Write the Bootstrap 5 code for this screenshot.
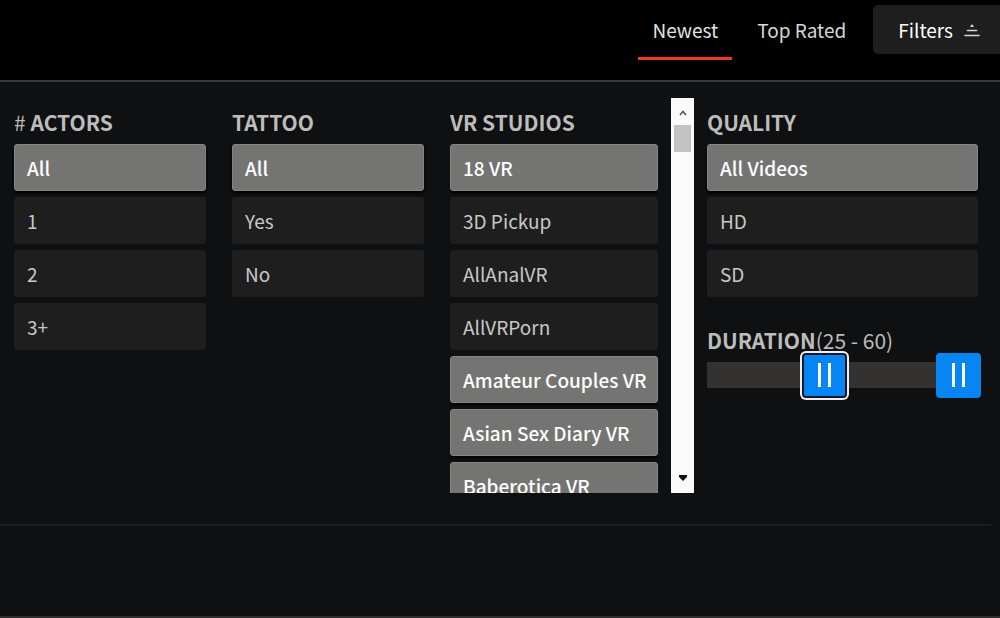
<!DOCTYPE html>
<html lang="en">
<head>
<meta charset="utf-8">
<meta name="viewport" content="width=device-width, initial-scale=1">
<title>Video filters</title>
<link href="https://cdn.jsdelivr.net/npm/bootstrap@5.3.0/dist/css/bootstrap.min.css" rel="stylesheet">
<style>
  body { background: #0f1011; color: #d4d4d2; font-family: "Noto Sans CJK JP", "Open Sans", sans-serif; font-size: 19px; line-height: 32px; }
  .topbar { background: #000; height: 82px; border-bottom: 2px solid #383838; }
  .sort-link { color: #d8d8d6; padding: 14px 14px 11px; border-bottom: 3px solid transparent; text-decoration: none; }
  .sort-link.active { color: #e4e4e2; border-color: #ee3c22; }
  .sort-group { gap: 11px; margin-right: 13px; }
  .filter-toggle { background: #1e1e1e; color: #fff; border: 0; border-radius: 5px 0 0 5px; margin-top: 5px; height: 49px; padding: 0 20px 0 25px; gap: 11px; }
  .filters { display: grid; grid-template-columns: 205fr 205fr 244fr 271fr; column-gap: 13px; padding: 16px 22px 31px 14px; }
  .filters > section { min-width: 0; }
  .narrow-group { padding-right: 13px; }
  .group-title { font-size: 21px; line-height: 32px; font-weight: 700; margin: 0; padding: 8px 0 6px; color: #bcbcba; white-space: nowrap; }
  .group-title span { font-weight: 400; }
  .options { gap: 6px; }
  .option { flex: none; height: 47px; padding: 0 12px; border: 1px solid transparent; border-radius: 3px; background: #1e1e1e; color: #c8c8c6; text-align: left; white-space: nowrap; }
  .option.active { background: #747473; border-color: #858584; color: #fff; font-weight: 500; box-shadow: 0 2px 3px #000; }
  .studios { height: 395px; gap: 13px; }
  .studio-list { overflow: hidden; min-width: 0; }
  .scroll-rail { flex: none; width: 23px; background: #fafafa; padding: 12px 3px; }
  .scroll-thumb { height: 27px; background: #c2c2c2; margin-top: 9px; }
  .duration { padding: 27px 0 0; }
  .range-box { height: 48px; margin: -5px -3px 0 0; }
  .range-rail { height: 26px; background: #333231; margin-right: 3px; }
  .dual { position: absolute; inset: 0; width: 100%; height: 100%; margin: 0; appearance: none; -webkit-appearance: none; background: none; pointer-events: none; outline: 0; }
  .dual::-webkit-slider-thumb {
    -webkit-appearance: none; pointer-events: auto; width: 45px; height: 45px; border: 0; border-radius: 4px;
    background: linear-gradient(#fff, #fff) 16px 50% / 3px 24px no-repeat, linear-gradient(#fff, #fff) 26px 50% / 3px 24px no-repeat, #0785f2;
  }
  .dual.current::-webkit-slider-thumb { border: 2px solid #10182c; background-position: 14px 50%, 24px 50%, 0 0; box-shadow: 0 0 0 2px #f4efef; }
  .divider { height: 2px; background: #1d1d1e; margin-right: 9px; }
  .results { border-bottom: 2px solid #2f2e2f; }
</style>
</head>
<body class="min-vh-100 d-flex flex-column">
<header class="topbar d-flex justify-content-end align-items-start">
  <nav class="sort-group d-flex" aria-label="Sort order">
    <a class="sort-link active" href="#newest" aria-current="page">Newest</a>
    <a class="sort-link" href="#top">Top Rated</a>
  </nav>
  <button class="filter-toggle d-flex align-items-center" type="button" aria-expanded="true">Filters
    <svg width="16" height="14" viewBox="0 0 16 14" aria-hidden="true"><path d="M8 1l2 3H6z" fill="#d8d8d8"/><path d="M3.500 7.500h9M1 12.500h14" fill="none" stroke="#d8d8d8" stroke-width="1.600" stroke-linecap="round"/></svg>
  </button>
</header>
<main class="filters">
  <section class="narrow-group">
    <h2 class="group-title"><span>#</span> ACTORS</h2>
    <div class="options d-flex flex-column">
      <button type="button" class="option active">All</button>
      <button type="button" class="option">1</button>
      <button type="button" class="option">2</button>
      <button type="button" class="option">3+</button>
    </div>
  </section>
  <section class="narrow-group">
    <h2 class="group-title">TATTOO</h2>
    <div class="options d-flex flex-column">
      <button type="button" class="option active">All</button>
      <button type="button" class="option">Yes</button>
      <button type="button" class="option">No</button>
    </div>
  </section>
  <section class="studios d-flex">
    <div class="studio-list flex-fill">
      <h2 class="group-title">VR STUDIOS</h2>
      <div class="options d-flex flex-column">
        <button type="button" class="option active">18 VR</button>
        <button type="button" class="option">3D Pickup</button>
        <button type="button" class="option">AllAnalVR</button>
        <button type="button" class="option">AllVRPorn</button>
        <button type="button" class="option active">Amateur Couples VR</button>
        <button type="button" class="option active">Asian Sex Diary VR</button>
        <button type="button" class="option active">Baberotica VR</button>
      </div>
    </div>
    <div class="scroll-rail d-flex flex-column align-items-center justify-content-between" aria-hidden="true">
      <div class="w-100 d-flex flex-column align-items-center">
        <svg width="8" height="6" viewBox="0 0 8 6"><path d="M1 5l3-3.500 3 3.500" fill="none" stroke="#555" stroke-width="1.600"/></svg>
        <div class="scroll-thumb w-100"></div>
      </div>
      <svg width="8" height="6" viewBox="0 0 8 6"><path d="M0 0h8v2L4 6 0 2z" fill="#111"/></svg>
    </div>
  </section>
  <section>
    <h2 class="group-title">QUALITY</h2>
    <div class="options d-flex flex-column">
      <button type="button" class="option active">All Videos</button>
      <button type="button" class="option">HD</button>
      <button type="button" class="option">SD</button>
    </div>
    <h2 class="group-title duration">DURATION<span>(25 - 60)</span></h2>
    <div class="range-box position-relative d-flex align-items-center">
      <div class="range-rail flex-fill"></div>
      <input class="dual" type="range" min="0" max="60" value="60" aria-label="Maximum duration">
      <input class="dual current" type="range" min="0" max="60" value="25" aria-label="Minimum duration">
    </div>
  </section>
</main>
<div class="divider"></div>
<footer class="results flex-fill"></footer>
<script src="https://cdn.jsdelivr.net/npm/bootstrap@5.3.0/dist/js/bootstrap.bundle.min.js"></script>
</body>
</html>
